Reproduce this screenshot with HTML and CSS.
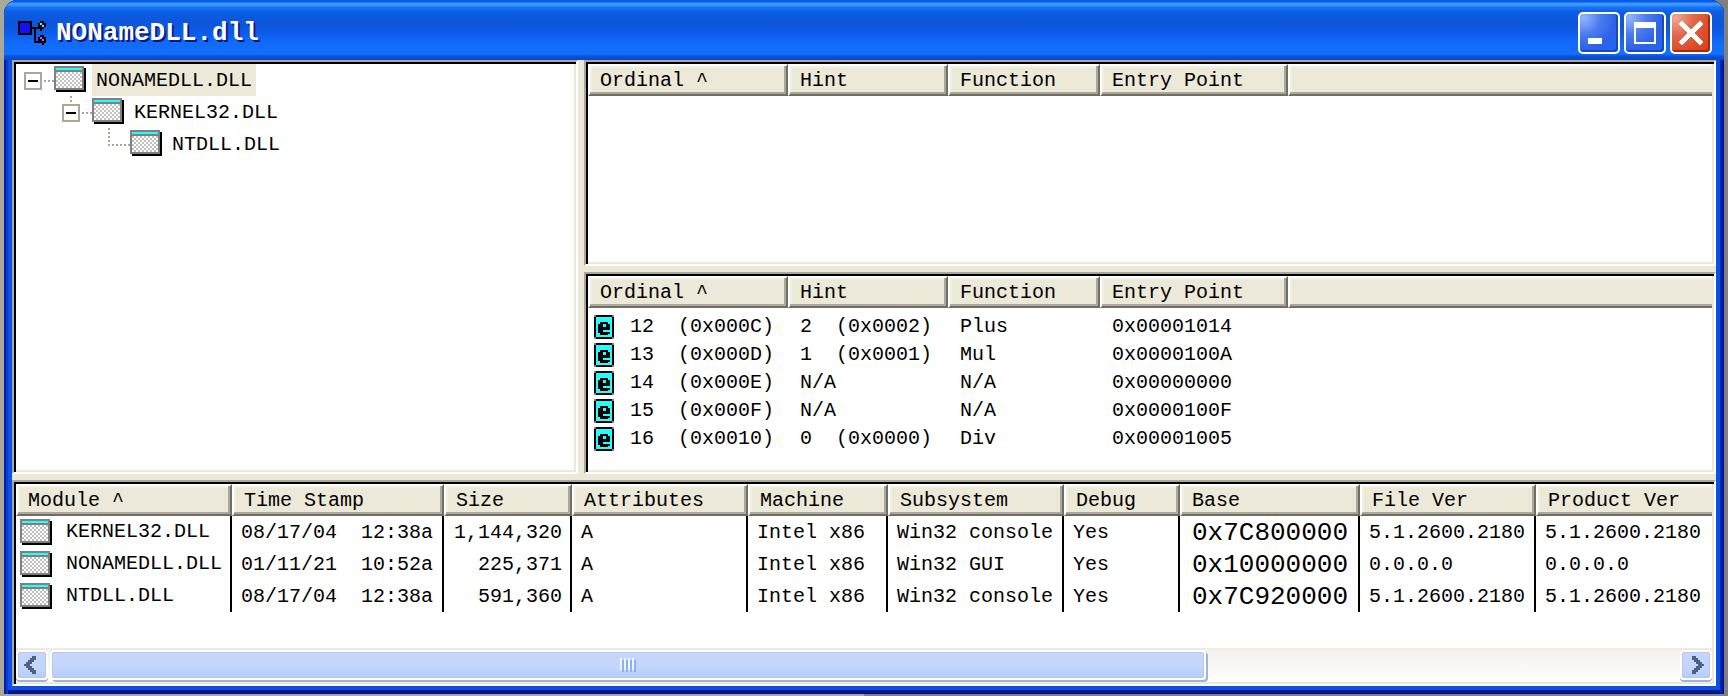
FILE: index.html
```html
<!DOCTYPE html>
<html lang="en">
<head>
<meta charset="utf-8">
<title>NONameDLL.dll</title>
<link rel="stylesheet" href="styles.css">
</head>
<body>
<svg class="defs" aria-hidden="true">
  <defs>
    <pattern id="dither" width="4" height="4" patternUnits="userSpaceOnUse">
      <rect width="4" height="4" fill="#fff"/><rect width="2" height="2" fill="#c0c0c0"/><rect x="2" y="2" width="2" height="2" fill="#c0c0c0"/>
    </pattern>
    <symbol id="module" viewBox="0 0 32 26">
      <path d="M2 2H32V26H2z" fill="#000"/>
      <path d="M0 0H30V24H0z" fill="#808080"/>
      <path d="M2 2H28V4H2z" fill="#2ff"/>
      <path d="M2 6H28V22H2z" fill="url(#dither)"/>
    </symbol>
    <symbol id="export" viewBox="0 0 20 24">
      <path d="M0 0H20V24H0z" fill="#808080"/>
      <path d="M2 0H18V2H20V22H18V24H2V22H0V2H2z" fill="#000"/>
      <path d="M2 2H18V22H2z" fill="#2ff"/>
      <path d="M6 7H14V9H16V15H9V17H16V19H14V20H6V18H4V9H6zM9 9V12H12V9z" fill="#000" fill-rule="evenodd"/>
    </symbol>
  </defs>
</svg>
<div class="window">
  <header class="titlebar">
    <svg class="app-icon" viewBox="0 0 28 24" aria-hidden="true">
      <path d="M0 0H14V14H0z" fill="#000"/><path d="M2 2H12V12H2z" fill="#11f"/>
      <path d="M14 6H20V8H18V20H20V22H16V8H14z" fill="#000"/>
      <path d="M20 2H22V0H26V2H28V6H26V8H24V10H22V8H20z" fill="#000"/><path d="M22 2H24V4H22zM24 4H26V6H24z" fill="#2ff"/>
      <path d="M20 16H22V14H26V16H28V22H26V24H24V22H20z" fill="#000"/><path d="M22 16H24V18H22zM22 18H26V20H24V18z" fill="#f3f"/>
    </svg>
    <h1 class="title">NONameDLL.dll</h1>
    <div class="controls">
      <button class="control" type="button" aria-label="Minimize"><svg viewBox="0 0 42 42"><path d="M10 26H24V32H10z" fill="#fff"/></svg></button>
      <button class="control" type="button" aria-label="Maximize"><svg viewBox="0 0 42 42"><path d="M10 10H32V32H10zM12 16V30H30V16z" fill="#fff" fill-rule="evenodd"/></svg></button>
      <button class="control close" type="button" aria-label="Close"><svg viewBox="0 0 42 42"><path d="M12 12L30 30M30 12L12 30" stroke="#fff" stroke-width="5" stroke-linecap="square"/></svg></button>
    </div>
  </header>
  <main class="workspace">
    <div class="upper">
      <nav class="pane tree" aria-label="Module tree">
        <ul>
          <li>
            <div class="node"><button class="toggle" type="button" aria-label="Collapse NONAMEDLL.DLL"></button><span class="dots"></span><svg class="module-icon"><use href="#module"/></svg><span class="label selected">NONAMEDLL.DLL</span></div>
            <ul>
              <li>
                <div class="node"><button class="toggle" type="button" aria-label="Collapse KERNEL32.DLL"></button><span class="dots"></span><svg class="module-icon"><use href="#module"/></svg><span class="label">KERNEL32.DLL</span></div>
                <ul>
                  <li><div class="node leaf"><span class="elbow"></span><svg class="module-icon"><use href="#module"/></svg><span class="label">NTDLL.DLL</span></div></li>
                </ul>
              </li>
            </ul>
          </li>
        </ul>
      </nav>
      <div class="functions">
        <section class="pane" aria-label="Imports">
          <table class="list function-list">
            <colgroup><col class="w-ordinal"><col class="w-hint"><col class="w-function"><col class="w-entry"><col></colgroup>
            <thead><tr><th>Ordinal ^</th><th>Hint</th><th>Function</th><th>Entry Point</th><th class="last"></th></tr></thead>
          </table>
        </section>
        <section class="pane" aria-label="Exports">
          <table class="list function-list">
            <colgroup><col class="w-ordinal"><col class="w-hint"><col class="w-function"><col class="w-entry"><col></colgroup>
            <thead><tr><th>Ordinal ^</th><th>Hint</th><th>Function</th><th>Entry Point</th><th class="last"></th></tr></thead>
            <tbody>
              <tr><td><span class="ordinal"><svg class="export-icon"><use href="#export"/></svg>12  (0x000C)</span></td><td>2  (0x0002)</td><td>Plus</td><td>0x00001014</td><td></td></tr>
              <tr><td><span class="ordinal"><svg class="export-icon"><use href="#export"/></svg>13  (0x000D)</span></td><td>1  (0x0001)</td><td>Mul</td><td>0x0000100A</td><td></td></tr>
              <tr><td><span class="ordinal"><svg class="export-icon"><use href="#export"/></svg>14  (0x000E)</span></td><td>N/A</td><td>N/A</td><td>0x00000000</td><td></td></tr>
              <tr><td><span class="ordinal"><svg class="export-icon"><use href="#export"/></svg>15  (0x000F)</span></td><td>N/A</td><td>N/A</td><td>0x0000100F</td><td></td></tr>
              <tr><td><span class="ordinal"><svg class="export-icon"><use href="#export"/></svg>16  (0x0010)</span></td><td>0  (0x0000)</td><td>Div</td><td>0x00001005</td><td></td></tr>
            </tbody>
          </table>
        </section>
      </div>
    </div>
    <section class="pane modules" aria-label="Modules">
      <table class="list module-list">
        <colgroup><col class="w-module"><col class="w-time"><col class="w-size"><col class="w-attributes"><col class="w-machine"><col class="w-subsystem"><col class="w-debug"><col class="w-base"><col class="w-file"><col></colgroup>
        <thead><tr><th>Module ^</th><th>Time Stamp</th><th>Size</th><th>Attributes</th><th>Machine</th><th>Subsystem</th><th>Debug</th><th>Base</th><th>File Ver</th><th class="last">Product Ver</th></tr></thead>
        <tbody>
          <tr><td><span class="module"><svg class="module-icon"><use href="#module"/></svg>KERNEL32.DLL</span></td><td>08/17/04  12:38a</td><td class="number">1,144,320</td><td>A</td><td>Intel x86</td><td>Win32 console</td><td>Yes</td><td class="base">0x7C800000</td><td>5.1.2600.2180</td><td>5.1.2600.2180</td></tr>
          <tr><td><span class="module"><svg class="module-icon"><use href="#module"/></svg>NONAMEDLL.DLL</span></td><td>01/11/21  10:52a</td><td class="number">225,371</td><td>A</td><td>Intel x86</td><td>Win32 GUI</td><td>Yes</td><td class="base">0x10000000</td><td>0.0.0.0</td><td>0.0.0.0</td></tr>
          <tr><td><span class="module"><svg class="module-icon"><use href="#module"/></svg>NTDLL.DLL</span></td><td>08/17/04  12:38a</td><td class="number">591,360</td><td>A</td><td>Intel x86</td><td>Win32 console</td><td>Yes</td><td class="base">0x7C920000</td><td>5.1.2600.2180</td><td>5.1.2600.2180</td></tr>
        </tbody>
      </table>
      <div class="scrollbar">
        <button class="arrow" type="button" aria-label="Scroll left"><svg viewBox="0 0 28 26"><path d="M14 4H18V8H16V10H14V12H12V14H14V16H16V18H18V22H14V20H12V18H10V16H8V14H6V12H8V10H10V8H12V6H14z" fill="#4d6185"/></svg></button>
        <div class="track"><div class="thumb"><svg class="grip" viewBox="0 0 16 14"><path d="M1 0V12M5 0V12M9 0V12M13 0V12" stroke="#eef4fe" stroke-width="2"/><path d="M3 2V14M7 2V14M11 2V14M15 2V14" stroke="#8cb0f8" stroke-width="2"/></svg></div></div>
        <button class="arrow" type="button" aria-label="Scroll right"><svg viewBox="0 0 28 26"><path d="M10 4H14V6H16V8H18V10H20V12H22V14H20V16H18V18H16V20H14V22H10V18H12V16H14V14H16V12H14V10H12V8H10z" fill="#4d6185"/></svg></button>
      </div>
    </section>
  </main>
</div>
</body>
</html>
```
FILE: styles.css
```css
* {
  box-sizing: border-box;
}

body {
  margin: 0;
  padding: 0 4px 2px;
  min-height: 100vh;
  display: flex;
  background: linear-gradient(90deg, #aca899 0, #aca899 50%, #808080 50%);
  font-family: "Liberation Mono", monospace;
  font-size: 20px;
  line-height: 26px;
  color: #000;
}

.defs {
  position: absolute;
  width: 0;
  height: 0;
}

svg {
  display: block;
  flex: none;
  shape-rendering: crispEdges;
}

button {
  padding: 0;
  font: inherit;
}

.window {
  flex: 1;
  min-width: 0;
  display: flex;
  flex-direction: column;
  padding: 0 8px 8px;
  border-radius: 14px 14px 0 0;
  overflow: hidden;
  background: #0a50e4;
  box-shadow: inset 2px 0 #0020a8, inset -2px 0 #00158c, inset 4px 0 #0a3cd2, inset -4px 0 #0426b0, inset 0 -4px #00158c;
}

.titlebar {
  display: flex;
  align-items: center;
  height: 60px;
  margin: 0 -8px;
  padding: 6px 12px 0 14px;
  background: linear-gradient(#0a5ce6 0, #0a5ce6 2px, #3c97ff 3px, #3c97ff 5px, #1a76f6 7px, #0c5de4 12px, #0c56da 22px, #0c5ae6 32px, #1269fa 42px, #1271ff 54px, #0b52dc 56px, #0a46c8 60px);
}

.app-icon {
  width: 28px;
  height: 24px;
}

.title {
  flex: 1;
  margin: 0 0 0 10px;
  font-size: 26px;
  line-height: 32px;
  color: #fff;
  text-shadow: 2px 2px #0a1883;
}

.controls {
  display: flex;
  gap: 4px;
}

.control {
  width: 42px;
  height: 42px;
  border: 2px solid #fff;
  border-radius: 5px;
  background: radial-gradient(circle at 10% 10%, #96b4fa 0, #4a7bee 35%, #2c62e8 65%, #1b6cf4 100%);
  box-shadow: inset -2px -2px #1d48bc;
}

.control svg {
  width: 42px;
  height: 42px;
  margin: -2px;
}

.close {
  background: radial-gradient(circle at 10% 10%, #f0a898 0, #e2694e 35%, #de4b26 70%, #d8441c 100%);
  box-shadow: inset -2px -2px #a82a0c;
}

.workspace {
  flex: 1;
  display: grid;
  grid-template-rows: 207fr 103fr;
  gap: 6px;
  background: #ece9d8;
}

.upper {
  display: grid;
  grid-template-columns: minmax(0, 1fr) minmax(0, 2fr);
  gap: 6px;
}

.functions {
  display: grid;
  grid-template-rows: 103fr 101fr;
  gap: 6px;
}

.pane {
  min-width: 0;
  border: 2px solid;
  border-color: #aca899 #fff #fff #aca899;
  background: #fff;
  padding: 2px;
  box-shadow: inset 2px 2px #000, inset -2px -2px #ece9d8;
  overflow: hidden;
}

.tree ul {
  margin: 0;
  padding: 0;
  list-style: none;
}

.tree ul ul {
  padding-left: 38px;
}

.node {
  display: flex;
  align-items: flex-start;
  height: 32px;
  padding-left: 8px;
}

.toggle {
  width: 18px;
  height: 18px;
  margin: 8px 2px 0 0;
  border: 2px solid #aca899;
  background: linear-gradient(#000, #000) center / 10px 2px no-repeat #fff;
}

.dots {
  width: 10px;
  height: 2px;
  margin-top: 16px;
  background: repeating-linear-gradient(90deg, #aca899 0, #aca899 2px, #fff 2px, #fff 4px);
}

.tree ul ul > li > .node:not(.leaf) {
  background: repeating-linear-gradient(#aca899 0, #aca899 2px, #fff 2px, #fff 4px) 16px 0 / 2px 6px no-repeat;
}

.elbow {
  width: 22px;
  height: 18px;
  margin-left: 8px;
  background:
    repeating-linear-gradient(#aca899 0, #aca899 2px, #fff 2px, #fff 4px) 0 0 / 2px 18px no-repeat,
    repeating-linear-gradient(90deg, #aca899 0, #aca899 2px, #fff 2px, #fff 4px) 0 16px / 22px 2px no-repeat;
}

.module-icon {
  width: 32px;
  height: 26px;
  margin-top: 2px;
}

.label {
  height: 32px;
  margin-left: 6px;
  padding: 2px 4px 0;
  line-height: 30px;
}

.selected {
  background: #ece9d8;
}

.list {
  width: 100%;
  table-layout: fixed;
  border-collapse: separate;
  border-spacing: 0;
  white-space: pre;
}

th {
  height: 32px;
  padding: 2px 0 0 10px;
  border: 2px solid;
  border-color: #fff #716f64 #716f64 #fff;
  background: #ece9d8;
  box-shadow: inset -2px -2px #aca899, inset 2px 2px #f1efe2;
  font-weight: 400;
  text-align: left;
  overflow: hidden;
}

.last {
  border-right: 0;
  box-shadow: inset 0 -2px #aca899, inset 2px 2px #f1efe2;
}

td {
  padding: 2px 0 0 12px;
  overflow: hidden;
}

.function-list tbody::before {
  content: "";
  display: block;
  height: 4px;
}

.function-list td {
  height: 28px;
}

.function-list td:first-child {
  padding-left: 6px;
}

.ordinal,
.module {
  display: flex;
  align-items: center;
}

.ordinal {
  gap: 16px;
}

.export-icon {
  width: 20px;
  height: 24px;
}

.module-list td {
  height: 32px;
  padding-left: 9px;
  border-right: 2px solid #000;
}

.module-list td:first-child {
  padding-top: 0;
  padding-left: 4px;
}

.module-list td:last-child {
  border-right: 0;
}

.module {
  gap: 14px;
}

.module .module-icon {
  margin-top: 0;
}

.module-list .number {
  padding-right: 8px;
  text-align: right;
}

.module-list .base {
  padding-left: 12px;
  font-size: 26px;
}

.w-ordinal { width: 200px; }
.w-hint { width: 160px; }
.w-function { width: 152px; }
.w-entry { width: 188px; }
.w-module { width: 216px; }
.w-time { width: 212px; }
.w-size { width: 128px; }
.w-attributes { width: 176px; }
.w-machine { width: 140px; }
.w-subsystem { width: 176px; }
.w-debug { width: 116px; }
.w-base { width: 180px; }
.w-file { width: 176px; }

.modules {
  display: flex;
  flex-direction: column;
  justify-content: space-between;
}

.scrollbar {
  display: flex;
  height: 34px;
  border-top: 2px solid #eeede5;
  background: linear-gradient(#f3f1ec, #fefefb);
}

.arrow,
.thumb {
  border: 2px solid #fff;
  border-radius: 4px;
  background: linear-gradient(#c8d6fb, #c4d5fc 60%, #b2ccfb);
  box-shadow: inset 0 0 0 1px #b4c8f6, 0 2px #9db5d9;
}

.arrow {
  width: 32px;
  height: 30px;
}

.arrow svg {
  width: 28px;
  height: 26px;
}

.track {
  flex: 1;
  padding: 0 2px;
}

.thumb {
  display: flex;
  align-items: center;
  justify-content: center;
  width: 71%;
  height: 30px;
  box-shadow: inset 0 0 0 1px #b4c8f6, 2px 2px #9db5d9;
}

.grip {
  width: 16px;
  height: 14px;
}
```
